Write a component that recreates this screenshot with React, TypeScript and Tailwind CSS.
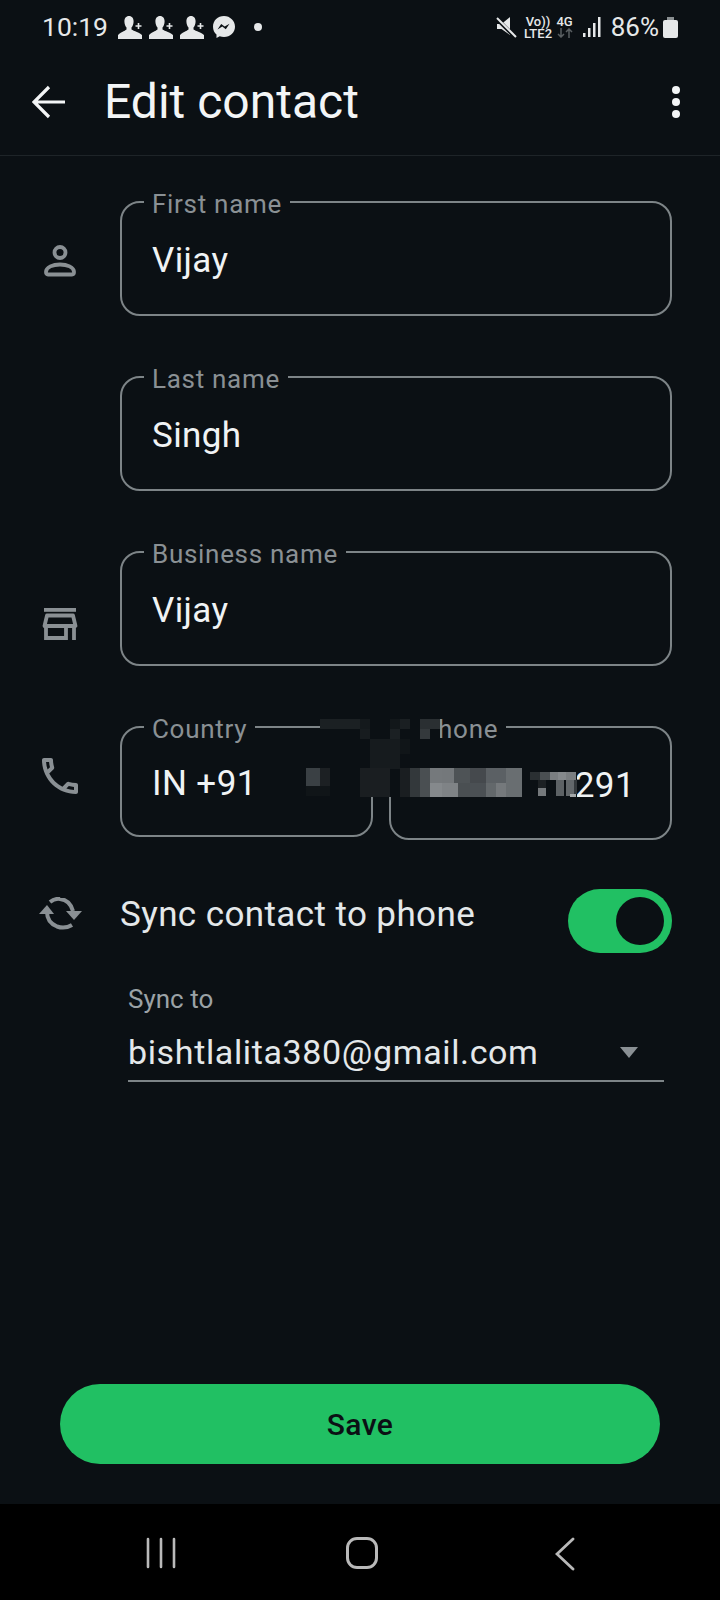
import React from 'react';

const BG = 'bg-[#0b1014]';

// privacy mosaic over the phone number: x, y, w, h, colour (page px minus the svg origin 300,715)
const MOSAIC: [number, number, number, number, string][] = [
  [20, 0, 120, 53, '#0b1014'],
  [0, 53, 277, 29, '#0b1014'],
  [20, 4, 40, 10, '#1b2023'],
  [60, 4, 10, 10, '#14191c'],
  [90, 4, 10, 10, '#12171a'],
  [100, 4, 10, 10, '#1a1f22'],
  [120, 4, 20, 10, '#2a2f32'],
  [60, 14, 10, 10, '#171c1f'],
  [90, 14, 10, 10, '#1b2023'],
  [120, 14, 10, 10, '#34393c'],
  [70, 24, 30, 30, '#161b1e'],
  [100, 24, 10, 15, '#101518'],
  [6, 53, 14, 18, '#3a4044'],
  [20, 53, 10, 18, '#1c2023'],
  [6, 71, 24, 10, '#101518'],
  [60, 53, 30, 29, '#1a1e21'],
  [100, 53, 10, 29, '#1a1e21'],
  [110, 53, 10, 29, '#33383b'],
  [120, 53, 10, 29, '#4a4f52'],
  [130, 53, 12, 15, '#75797c'],
  [130, 68, 12, 14, '#85898c'],
  [142, 53, 12, 15, '#74787b'],
  [142, 68, 16, 14, '#7f8386'],
  [154, 53, 16, 15, '#4e5356'],
  [158, 68, 12, 14, '#4a4f52'],
  [170, 53, 16, 15, '#45494d'],
  [170, 68, 16, 14, '#4b5054'],
  [186, 53, 20, 15, '#5b6064'],
  [186, 68, 10, 14, '#63686b'],
  [196, 68, 10, 14, '#75797c'],
  [206, 53, 16, 29, '#696e71'],
  [230, 57, 10, 8, '#2a2f32'],
  [240, 57, 10, 8, '#4a4f52'],
  [250, 57, 8, 8, '#7a7e81'],
  [258, 57, 8, 8, '#85898c'],
  [266, 57, 10, 8, '#7a7e81'],
  [238, 65, 8, 16, '#1c2023'],
  [238, 73, 8, 8, '#75797c'],
  [256, 65, 8, 16, '#5d6265'],
  [266, 65, 8, 16, '#63686b'],
  [270, 79, 6, 3, '#a3a7a9'],
  [274, 65, 3, 14, '#34393c'],
];

const AddPerson = () => (
  <svg width="24" height="23" viewBox="0 0 24 23" className="text-[#e6e8e9]">
    <path
      fill="currentColor"
      d="M11 0c3 0 4.600 2.400 4.600 5.400 0 2.600-1 4.800-2.100 6v1.800c0 1 6.500 2.400 10.500 5.800V23H0v-4c3.500-3.400 8.500-4.800 8.500-5.800v-1.800C7.400 10.200 6.400 8 6.400 5.400 6.400 2.400 8 0 11 0z"
    />
    <path stroke="#0b1014" strokeWidth="3" d="M20 6v8M16 10h8" />
    <path stroke="currentColor" strokeWidth="1.600" d="M17.500 10h6M20.500 7v6" />
  </svg>
);

const StatusBar = () => (
  <div className="flex h-[52px] items-center pl-[42px] pr-[42px] pt-[2px] text-[#e6e8e9]">
    <span className="text-[26.5px]">10:19</span>
    <div className="ml-[10px] flex items-center gap-[7px]">
      <AddPerson />
      <AddPerson />
      <AddPerson />
    </div>
    <svg width="24" height="24" viewBox="0 0 24 24" className="ml-[8px]">
      <path
        fill="currentColor"
        d="M12 1C5.800 1 1 5.500 1 11.700c0 3.200 1.300 6 3.500 7.900v3.400l3.200-1.800c1.300.5 2.800.7 4.300.7 6.200 0 11-4.500 11-10.200S18.200 1 12 1z"
      />
      <path fill="#0b1014" d="M5.500 14.500l3.700-5.600 3.500 2.700 4.800-2.900-3.700 5.600-3.500-2.700z" />
    </svg>
    <span className="ml-[18px] h-[8px] w-[8px] rounded-full bg-[#e6e8e9]" />
    <div className="ml-auto flex items-center">
      <svg width="21" height="21" viewBox="0 0 21 21">
        <path fill="currentColor" d="M1 7h4.500L14 0v18l-8.500-6H1z" />
        <path stroke="#0b1014" strokeWidth="4" d="M0 1l21 21" />
        <path stroke="currentColor" strokeWidth="2" d="M1 1l19 19" />
      </svg>
      <div className="ml-[7px] flex w-[27px] flex-col items-center text-[13px] font-medium leading-[11px]">
        <span>Vo))</span>
        <span className="mt-[1px]">LTE2</span>
      </div>
      <div className="ml-[5px] flex flex-col items-center">
        <span className="text-[13px] font-medium leading-[12px]">4G</span>
        <svg width="16" height="10" viewBox="0 0 16 10" className="text-[#5a5f62]">
          <path stroke="currentColor" strokeWidth="1.500" fill="none" d="M4 0v9M1 6l3 3 3-3M12 10V1M9 4l3-3 3 3" />
        </svg>
      </div>
      <svg width="18" height="20" viewBox="0 0 18 20" className="ml-[10px]">
        <path fill="currentColor" d="M0 16h2.500v4H0zM5 11h2.500v9H5zM10 6h2.500v14H10zM15 0h2.500v20H15z" />
      </svg>
      <span className="ml-[10px] text-[26px]">86%</span>
      <svg width="15" height="21" viewBox="0 0 15 21" className="ml-[4px]">
        <path fill="#8a8f91" d="M4 0h7v3H4z" />
        <rect y="3" width="15" height="18" rx="2" fill="currentColor" />
      </svg>
    </div>
  </div>
);

const AppBar = () => (
  <div className="flex h-[104px] items-center border-b border-[#1e2428] pl-[32px] pr-[40px] pb-[4px]">
    <svg width="34" height="34" viewBox="0 0 34 34" fill="none" stroke="#f3f5f6" strokeWidth="3.200">
      <path d="M33 17H3M17 2L2 17l15 15" />
    </svg>
    <span className="ml-[38px] text-[48px] leading-none text-[#f3f5f6]">Edit contact</span>
    <div className="ml-auto flex flex-col gap-[4px]">
      <span className="h-[8px] w-[8px] rounded-full bg-[#f3f5f6]" />
      <span className="h-[8px] w-[8px] rounded-full bg-[#f3f5f6]" />
      <span className="h-[8px] w-[8px] rounded-full bg-[#f3f5f6]" />
    </div>
  </div>
);

const Field = ({ label, value, className }: { label: string; value: string; className: string }) => (
  <div className={`relative flex items-center rounded-[20px] border-2 border-[#7d8487] ${className}`}>
    <span className={`absolute left-[22px] top-[-14px] px-[8px] pt-[2px] text-[26px] leading-[26px] tracking-[0.7px] text-[#8a9094] ${BG}`}>
      {label}
    </span>
    <span className="pt-[4px] text-[35px] leading-none tracking-[0.4px] text-[#f0f3f4]">{value}</span>
  </div>
);

const PersonIcon = () => (
  <svg width="32" height="32" viewBox="0 0 32 32" fill="none" stroke="#8a9094" strokeWidth="3.800">
    <circle cx="16" cy="7.500" r="5.500" />
    <path d="M2 27c0-5 7-7.500 14-7.500S30 22 30 27c0 1.500-.7 2.500-2 2.500H4c-1.300 0-2-1-2-2.500z" />
  </svg>
);

const StoreIcon = () => (
  <svg width="36" height="32" viewBox="0 0 36 32" fill="none" stroke="#8a9094" strokeWidth="3.800">
    <path d="M2 1.900h32" />
    <path d="M5 7.500h26l2.500 10.500h-31z" strokeLinejoin="round" />
    <path d="M4 18v14M32 18v14M4 30h20V18" />
  </svg>
);

const PhoneIcon = () => (
  <svg width="36" height="36" viewBox="3 3 18 18" fill="#8a9094">
    <path d="M6.540 5c.06.89.21 1.760.45 2.590l-1.200 1.200c-.41-1.200-.67-2.470-.76-3.790h1.510m9.860 12.020c.85.24 1.720.39 2.600.45v1.490c-1.320-.09-2.590-.35-3.800-.75l1.200-1.190M7.500 3H4c-.55 0-1 .45-1 1 0 9.390 7.610 17 17 17 .55 0 1-.45 1-1v-3.490c0-.55-.45-1-1-1-1.240 0-2.450-.2-3.570-.57-.1-.04-.21-.05-.31-.05-.26 0-.51.1-.71.29l-2.200 2.200c-2.830-1.450-5.150-3.760-6.590-6.590l2.200-2.200c.28-.28.36-.67.25-1.020C8.700 6.450 8.500 5.250 8.500 4c0-.55-.45-1-1-1z" />
  </svg>
);

const SyncIcon = () => (
  <svg width="44" height="34" viewBox="0 0 44 34" fill="none" stroke="#8a9094" strokeWidth="4">
    <path d="M12 5c3-2.500 6.500-3.500 10-3 6 .6 11 5 13 12" />
    <path d="M9 15c0 7 4 12 10 14.500 5 1.800 10 1.500 15-1.500" />
    <path d="M1 17l8-9 7 9z" fill="#8a9094" stroke="none" />
    <path d="M28 14h16l-8 9z" fill="#8a9094" stroke="none" />
  </svg>
);

const NavBar = () => (
  <div className="flex h-[96px] items-start bg-black pt-[33px] text-[#b9b9b9]">
    <svg width="30" height="32" viewBox="0 0 30 32" className="ml-[146px]" fill="none" stroke="currentColor" strokeWidth="2.600" strokeLinecap="round">
      <path d="M2 2v28M15 2v28M28 2v28" />
    </svg>
    <div className="ml-[170px] h-[32px] w-[32px] rounded-[11px] border-[3px] border-[#b9b9b9]" />
    <svg width="20" height="34" viewBox="0 0 20 34" className="ml-[177px]" fill="none" stroke="currentColor" strokeWidth="2.800" strokeLinecap="round">
      <path d="M18 2L2 17l16 15" />
    </svg>
  </div>
);

export default function App() {
  return (
    <div className={`relative flex h-[1600px] w-[720px] flex-col overflow-hidden font-['Roboto',sans-serif] ${BG}`}>
      <StatusBar />
      <AppBar />

      <div className="flex flex-1 flex-col pt-[45px]">
        <div className="flex h-[115px]">
          <div className="flex w-[120px] justify-center pt-[44px]"><PersonIcon /></div>
          <Field label="First name" value="Vijay" className="w-[552px] pl-[30px]" />
        </div>
        <div className="mt-[60px] flex h-[115px] pl-[120px]">
          <Field label="Last name" value="Singh" className="w-[552px] pl-[30px]" />
        </div>
        <div className="mt-[60px] flex h-[115px]">
          <div className="flex w-[120px] justify-center pt-[57px]"><StoreIcon /></div>
          <Field label="Business name" value="Vijay" className="w-[552px] pl-[30px]" />
        </div>
        <div className="mt-[60px] flex items-start">
          <div className="flex w-[120px] justify-center pt-[32px]"><PhoneIcon /></div>
          <Field label="Country" value="IN +91" className="h-[111px] w-[253px] pl-[30px]" />
          <Field label="Phone" value="291" className="ml-[16px] h-[114px] w-[283px] justify-end pr-[35px]" />
        </div>

        <div className="mt-[49px] flex h-[64px] items-start">
          <div className="flex w-[120px] justify-center pt-[8px]"><SyncIcon /></div>
          <span className="text-[35px] leading-[52px] tracking-[0.4px] text-[#e4e8ea]">Sync contact to phone</span>
          <div className="ml-auto mr-[48px] flex h-[64px] w-[104px] items-center justify-end rounded-full bg-[#21c063] pr-[8px]">
            <span className={`h-[48px] w-[48px] rounded-full ${BG}`} />
          </div>
        </div>

        <div className="ml-[128px] mr-[56px] mt-[30px] flex flex-col border-b-2 border-[#7d8487] pb-[6px]">
          <span className="text-[26px] leading-[32px] text-[#9ba2a6]">Sync to</span>
          <div className="mt-[15px] flex items-center justify-between">
            <span className="text-[34px] leading-[44px] tracking-[0.63px] text-[#e4e8ea]">bishtlalita380@gmail.com</span>
            <svg width="18" height="11" viewBox="0 0 18 11" className="mr-[26px]">
              <path fill="#8a9094" d="M0 0h18L9 11z" />
            </svg>
          </div>
        </div>

        <div className="mt-auto px-[60px] pb-[40px]">
          <button className="flex h-[80px] w-full items-center justify-center rounded-full bg-[#21c063] text-[30px] font-medium tracking-[0.4px] text-[#0b1014]">
            Save
          </button>
        </div>
      </div>

      <NavBar />

      {/* mosaic covers the top of the two phone boxes and most of the number */}
      <svg width="300" height="90" viewBox="0 0 300 90" className="absolute left-[300px] top-[715px]" shapeRendering="crispEdges">
        {MOSAIC.map(([x, y, w, h, c], i) => (
          <rect key={i} x={x} y={y} width={w} height={h} fill={c} />
        ))}
      </svg>
    </div>
  );
}
